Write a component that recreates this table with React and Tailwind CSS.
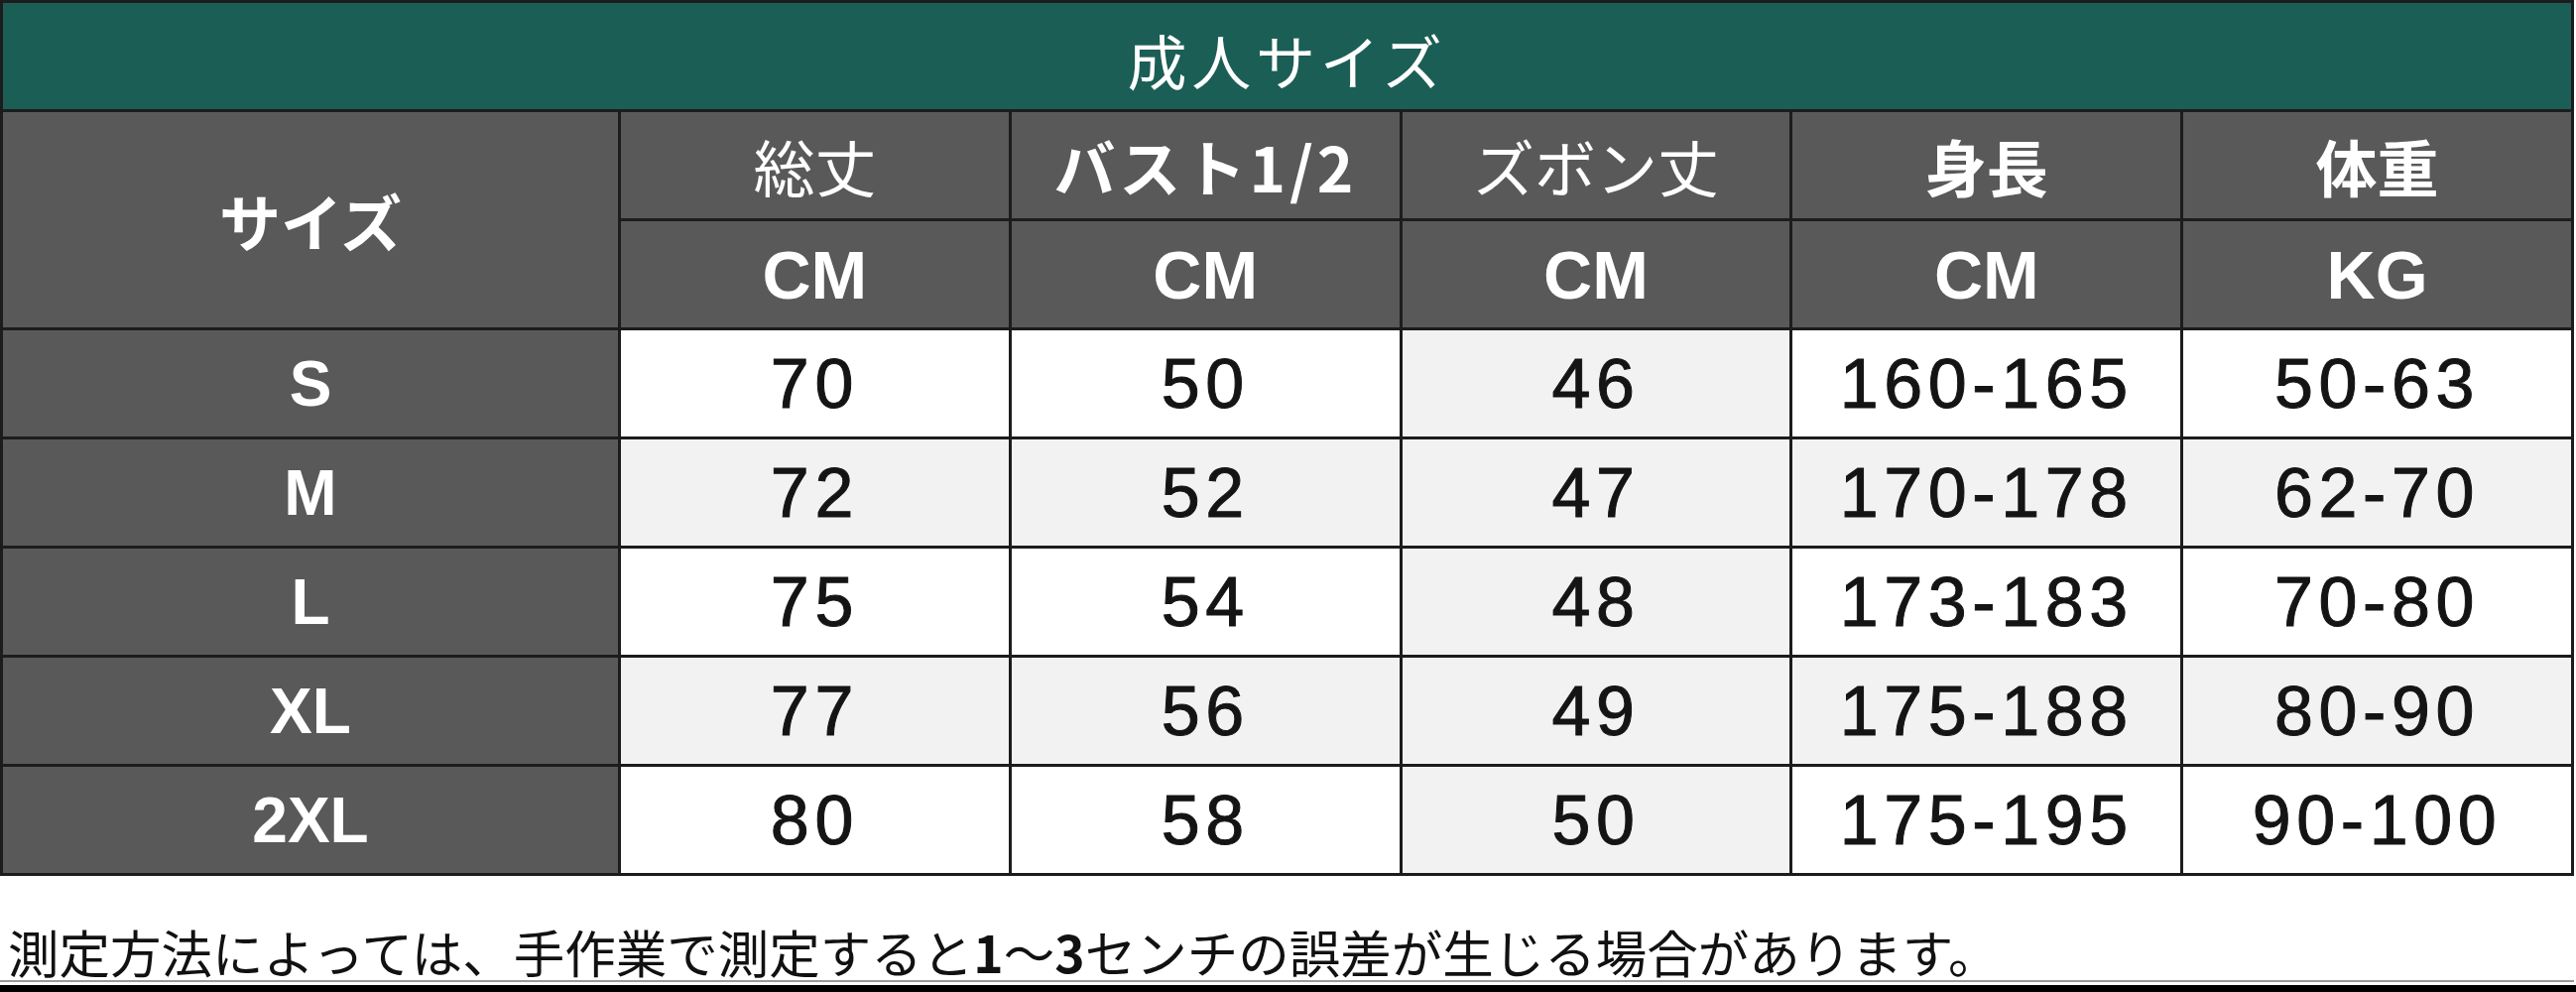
const rows = [
  ['S', '70', '50', '46', '160-165', '50-63'],
  ['M', '72', '52', '47', '170-178', '62-70'],
  ['L', '75', '54', '48', '173-183', '70-80'],
  ['XL', '77', '56', '49', '175-188', '80-90'],
  ['2XL', '80', '58', '50', '175-195', '90-100'],
];

const jp = "font-['Noto_Sans_CJK_JP',sans-serif]";
const latin = "font-['Liberation_Sans','Noto_Sans_CJK_JP',sans-serif]";

const Head = ({ children, bold, wide }) => (
  <div
    className={`bg-[#595959] flex items-center justify-center text-white text-[62px] leading-none ${jp} ${
      bold ? 'font-bold' : 'font-normal'
    } ${wide ? 'tracking-[0.06em]' : ''}`}
  >
    {children}
  </div>
);

const Unit = ({ children }) => (
  <div className={`bg-[#595959] flex items-center justify-center text-white text-[68px] font-bold leading-none ${latin}`}>
    {children}
  </div>
);

export default function App() {
  return (
    <div className="w-[2597px] h-[1000px] bg-white">
      {/* Size table */}
      <div className="w-[2595px] grid grid-cols-[620px_repeat(5,1fr)] grid-rows-[repeat(8,107px)] gap-[3px] p-[3px] bg-[#1c1c1c]">
        <div className={`col-span-6 bg-[#1b5e55] flex items-center justify-center pt-[6px] text-white text-[60px] tracking-[0.08em] leading-none ${jp}`}>
          成人サイズ
        </div>

        <div className={`row-span-2 bg-[#595959] flex items-center justify-center text-white text-[62px] font-bold leading-none ${jp}`}>
          サイズ
        </div>
        <Head>総丈</Head>
        <Head bold wide>バスト1/2</Head>
        <Head>ズボン丈</Head>
        <Head bold>身長</Head>
        <Head bold>体重</Head>

        <Unit>CM</Unit>
        <Unit>CM</Unit>
        <Unit>CM</Unit>
        <Unit>CM</Unit>
        <Unit>KG</Unit>

        {rows.map((r, i) => {
          const shaded = i % 2 === 1;
          return [
            <div
              key={`s${i}`}
              className={`bg-[#595959] flex items-center justify-center text-white text-[64px] font-bold leading-none ${latin}`}
            >
              {r[0]}
            </div>,
            ...r.slice(1).map((v, j) => (
              <div
                key={`${i}-${j}`}
                className={`flex items-center justify-center text-[#141414] text-[70px] tracking-[0.08em] leading-none [-webkit-text-stroke:1px_#141414] ${latin} ${
                  shaded || j === 2 ? 'bg-[#f2f2f2]' : 'bg-white'
                }`}
              >
                {v}
              </div>
            )),
          ];
        })}
      </div>

      {/* Footnote */}
      <div className="w-[2595px] h-[107px] border-b-2 border-[#9a9a9a] flex items-end pl-[8px] pb-[4px]">
        <p className={`text-[51.5px] leading-none text-[#111] ${jp}`}>
          測定方法によっては、手作業で測定すると<span className="font-bold">1</span>～<span className="font-bold">3</span>センチの誤差が生じる場合があります。
        </p>
      </div>
      <div className="mt-[3px] h-[7px] bg-black" />
    </div>
  );
}
